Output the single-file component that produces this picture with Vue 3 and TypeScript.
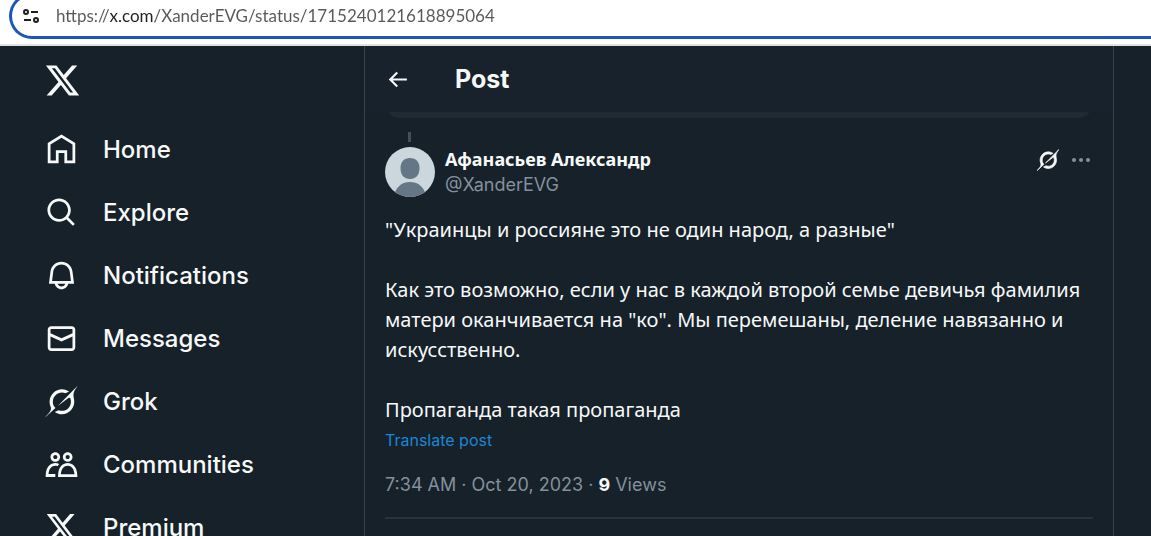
<script setup lang="ts">
import { ref } from 'vue'

interface NavItem {
  label: string
  viewBox: string
  path: string
}

const xLogo =
  'M18.244 2.25h3.308l-7.227 8.26 8.502 11.24H16.17l-5.214-6.817L4.99 21.75H1.68l7.73-8.835L1.254 2.25H8.08l4.713 6.231zm-1.161 17.52h1.833L7.084 4.126H5.117z'
const grokMark =
  'M12.745 20.54l10.97-8.19c.539-.4 1.307-.244 1.564.38 1.349 3.288.746 7.241-1.938 9.955-2.683 2.714-6.417 3.31-9.83 1.954l-3.728 1.745c5.347 3.697 11.84 2.782 15.898-1.324 3.219-3.255 4.216-7.692 3.284-11.693l.008.009c-1.351-5.878.332-8.227 3.782-13.031L33 0l-4.54 4.59v-.014L12.743 20.544m-2.263 1.987c-3.837-3.707-3.175-9.446.1-12.755 2.42-2.449 6.388-3.448 9.852-1.979l3.72-1.737c-.67-.49-1.53-1.017-2.515-1.387-4.455-1.854-9.789-.931-13.41 2.728-3.483 3.523-4.579 8.94-2.697 13.561 1.405 3.454-.899 5.898-3.22 8.364C1.49 30.2.666 31.074 0 32l10.478-9.466'

const navItems: NavItem[] = [
  {
    label: 'Home',
    viewBox: '0 0 24 24',
    path: 'M12 1.1l10 6.1V22h-7.900v-7.500h-4.200V22H2V7.200zM4 8.300V20h3.900v-7.500h8.200V20H20V8.300l-8-4.850z',
  },
  {
    label: 'Explore',
    viewBox: '0 0 24 24',
    path: 'M10.25 3.75c-3.59 0-6.5 2.91-6.5 6.5s2.91 6.5 6.5 6.5c1.795 0 3.419-.726 4.596-1.904 1.178-1.177 1.904-2.801 1.904-4.596 0-3.59-2.91-6.5-6.5-6.5zm-8.5 6.5c0-4.694 3.806-8.5 8.5-8.5s8.5 3.806 8.5 8.5c0 1.986-.682 3.815-1.824 5.262l4.781 4.781-1.414 1.414-4.781-4.781c-1.447 1.142-3.276 1.824-5.262 1.824-4.694 0-8.5-3.806-8.5-8.5z',
  },
  {
    label: 'Notifications',
    viewBox: '0 0 24 24',
    path: 'M19.993 9.042C19.48 5.017 16.054 2 11.996 2s-7.49 3.021-7.999 7.051L2.866 18H7.1c.463 2.282 2.481 4 4.9 4s4.437-1.718 4.9-4h4.236l-1.143-8.958zM12 20c-1.306 0-2.417-.835-2.829-2h5.658c-.412 1.165-1.523 2-2.829 2zm-6.866-4l.847-6.698C6.364 6.272 8.941 4 11.996 4s5.627 2.268 6.013 5.295L18.864 16H5.134z',
  },
  {
    label: 'Messages',
    viewBox: '0 0 24 24',
    path: 'M1.998 5.5c0-1.381 1.119-2.5 2.5-2.5h15c1.381 0 2.5 1.119 2.5 2.5v13c0 1.381-1.119 2.5-2.5 2.5h-15c-1.381 0-2.5-1.119-2.5-2.5v-13zm2.5-.5c-.276 0-.5.224-.5.5v2.764l8 3.638 8-3.636V5.5c0-.276-.224-.5-.5-.5h-15zm15.5 5.463l-8 3.636-8-3.638V18.5c0 .276.224.5.5.5h15c.276 0 .5-.224.5-.5v-8.037z',
  },
  { label: 'Grok', viewBox: '0 0 33 32', path: grokMark },
  {
    label: 'Communities',
    viewBox: '0 0 24 24',
    path: 'M7.501 19.917L7.471 21H.472l.029-1.027c.184-6.618 3.736-8.977 7-8.977.963 0 1.95.212 2.87.672-.444.478-.851 1.03-1.212 1.656-.507-.204-1.054-.329-1.658-.329-2.767 0-4.57 2.223-4.938 6.004H7.56c-.023.302-.05.599-.059.918zm15.998.056L23.528 21H9.472l.029-1.027c.184-6.618 3.736-8.977 7-8.977s6.816 2.358 7 8.977zM21.437 19c-.367-3.781-2.17-6.004-4.938-6.004s-4.57 2.223-4.938 6.004h9.875zm-4.938-9c-.799 0-1.527-.279-2.116-.73-.836-.64-1.384-1.638-1.384-2.77 0-1.93 1.567-3.5 3.5-3.5s3.5 1.57 3.5 3.5c0 1.132-.548 2.13-1.384 2.77-.589.451-1.317.73-2.116.73zm-1.5-3.5c0 .827.673 1.5 1.5 1.5s1.5-.673 1.5-1.5-.673-1.5-1.5-1.5-1.5.673-1.5 1.5zM7.5 3C9.433 3 11 4.57 11 6.5S9.433 10 7.5 10 4 8.43 4 6.5 5.567 3 7.5 3zm0 2C6.673 5 6 5.673 6 6.5S6.673 8 7.5 8 9 7.327 9 6.5 8.327 5 7.5 5z',
  },
  { label: 'Premium', viewBox: '0 0 24 24', path: xLogo },
]

const address = ref('https://x.com/XanderEVG/status/1715240121618895064')

const paragraphs: string[] = [
  '"Украинцы и россияне это не один народ, а разные"',
  'Как это возможно, если у нас в каждой второй семье девичья фамилия матери оканчивается на "ко". Мы перемешаны, деление навязанно и искусственно.',
  'Пропаганда такая пропаганда',
]
</script>

<template>
  <div class="window">
    <div class="toolbar">
      <div class="omnibox">
        <button class="site-info" type="button" aria-label="View site information">
          <svg viewBox="0 0 16 16" width="16" height="16" fill="none" stroke="currentColor" stroke-width="2">
            <circle cx="3" cy="4" r="2" />
            <path d="M8 4h7M1 12h7" />
            <circle cx="13" cy="12" r="2" />
          </svg>
        </button>
        <input v-model="address" class="address" type="text" aria-label="Address" spellcheck="false" />
      </div>
    </div>

    <div class="page">
      <header class="sidebar">
        <a class="logo" href="#" aria-label="X">
          <svg viewBox="0 0 24 24" width="37" height="37" fill="currentColor"><path :d="xLogo" /></svg>
        </a>
        <nav class="nav">
          <a v-for="item in navItems" :key="item.label" class="nav-link" href="#">
            <svg :viewBox="item.viewBox" width="33" height="33" fill="currentColor"><path :d="item.path" /></svg>
            <span>{{ item.label }}</span>
          </a>
        </nav>
      </header>

      <main class="column">
        <div class="column-header">
          <button class="icon-button" type="button" aria-label="Back">
            <svg viewBox="0 0 24 24" width="25" height="25" fill="currentColor">
              <path d="M7.414 13l5.043 5.04-1.414 1.42L3.586 12l7.457-7.46 1.414 1.42L7.414 11H21v2H7.414z" />
            </svg>
          </button>
          <h1>Post</h1>
        </div>
        <div class="card-edge"></div>

        <article class="post">
          <div class="thread-line"></div>
          <div class="author">
            <svg class="avatar" viewBox="0 0 50 50" width="50" height="50">
              <rect width="50" height="50" fill="#ccd6dd" />
              <path
                d="M25 11c-6 0-9.500 4-9.500 10 0 7 3.500 11 9.500 11s9.500-4 9.500-11c0-6-3.500-10-9.500-10z"
                fill="#657786"
              />
              <path d="M9 50c1-9 7-15 16-15s15 6 16 15z" fill="#657786" />
            </svg>
            <div class="names">
              <a class="name" href="#">Афанасьев Александр</a>
              <a class="handle" href="#">@XanderEVG</a>
            </div>
            <div class="actions">
              <button class="icon-button" type="button" aria-label="Explain this post">
                <svg viewBox="0 0 33 32" width="22" height="22" fill="currentColor" stroke="currentColor">
                  <path :d="grokMark" />
                </svg>
              </button>
              <button class="icon-button more" type="button" aria-label="More">
                <svg viewBox="0 0 24 24" width="24" height="24" fill="currentColor">
                  <circle cx="5" cy="12" r="2" />
                  <circle cx="12" cy="12" r="2" />
                  <circle cx="19" cy="12" r="2" />
                </svg>
              </button>
            </div>
          </div>

          <div class="body">
            <p v-for="text in paragraphs" :key="text">{{ text }}</p>
          </div>
          <button class="translate" type="button">Translate post</button>
          <div class="meta">
            <a href="#">7:34 AM · Oct 20, 2023</a> · <strong>9</strong> Views
          </div>
        </article>
      </main>
    </div>
  </div>
</template>

<style>
body {
  margin: 0;
  background: #16212a;
}
</style>

<style scoped>
.window {
  display: flex;
  flex-direction: column;
  height: 100vh;
  overflow: hidden;
  font-family: Inter, 'Liberation Sans', sans-serif;
  color: #f7f9f9;
}
.window * {
  box-sizing: border-box;
}
a {
  color: inherit;
  text-decoration: none;
}
button {
  margin: 0;
  padding: 0;
  border: 0;
  background: none;
  color: inherit;
  font: inherit;
  cursor: pointer;
}
svg {
  display: block;
  flex: none;
}

.toolbar {
  flex: none;
  height: 46px;
  padding-left: 9px;
  overflow: hidden;
  background: #fff;
  border-bottom: 2px solid #dfe3df;
}
.omnibox {
  display: flex;
  align-items: center;
  gap: 17px;
  height: 46px;
  margin-top: -7px;
  padding-left: 11px;
  border: 3px solid #1b57b5;
  border-right: 0;
  border-radius: 23px 0 0 23px;
  color: #1f1f1f;
}
.address {
  flex: 1;
  min-width: 0;
  padding: 0;
  border: 0;
  outline: 0;
  font: 17px/24px Lato, sans-serif;
  color: transparent;
  background: linear-gradient(90deg, #55585c 53px, #1f1f1f 53px, #1f1f1f 99px, #55585c 99px);
  background-clip: text;
}

.page {
  display: flex;
  flex: 1;
  min-height: 0;
}
.sidebar {
  flex: 0 1 364px;
  padding: 16px 0 0 45px;
}
.logo {
  display: block;
  width: 37px;
  margin-left: -1px;
}
.nav {
  display: flex;
  flex-direction: column;
  margin-top: 19px;
}
.nav-link {
  display: flex;
  align-items: center;
  gap: 25px;
  height: 63px;
  font-size: 24px;
  line-height: 30px;
  font-weight: 500;
}

.column {
  flex: 0 1 750px;
  min-width: 0;
  border: 1px solid #38434d;
  border-width: 0 1px;
}
.column-header {
  display: flex;
  align-items: center;
  gap: 45px;
  height: 66px;
  padding-left: 20px;
  background: #18222c;
}
h1 {
  margin: 0;
  font-size: 25px;
  line-height: 30px;
  font-weight: 700;
}
.card-edge {
  height: 6px;
  margin: 0 24px;
  background: #202a34;
  border-radius: 0 0 12px 12px / 0 0 6px 6px;
}

.post {
  margin: 0 20px;
  padding-bottom: 20px;
  border-bottom: 2px solid #29333d;
}
.thread-line {
  width: 3px;
  height: 10px;
  margin: 14px 0 5px 23px;
  background: #425059;
}
.author {
  display: flex;
  gap: 10px;
}
.avatar {
  border-radius: 50%;
}
.names {
  display: flex;
  flex: 1;
  flex-direction: column;
  min-width: 0;
  line-height: 25px;
}
.name {
  font-family: 'Noto Sans', sans-serif;
  font-size: 18px;
  font-weight: 700;
}
.handle {
  font-size: 18px;
  color: #84909c;
}
.actions {
  display: flex;
  align-items: center;
  gap: 10px;
  height: 26px;
}
.more {
  color: #84909c;
}
.body {
  display: flex;
  flex-direction: column;
  gap: 30px;
  margin-top: 18px;
  font: 20px/30px 'Noto Sans', sans-serif;
}
.body p {
  margin: 0;
}
.translate {
  display: block;
  font-size: 16px;
  line-height: 30px;
  color: #1d87d3;
}
.meta {
  margin-top: 17px;
  font-size: 18px;
  line-height: 25px;
  color: #84909c;
}
.meta strong {
  color: #f7f9f9;
}
</style>
